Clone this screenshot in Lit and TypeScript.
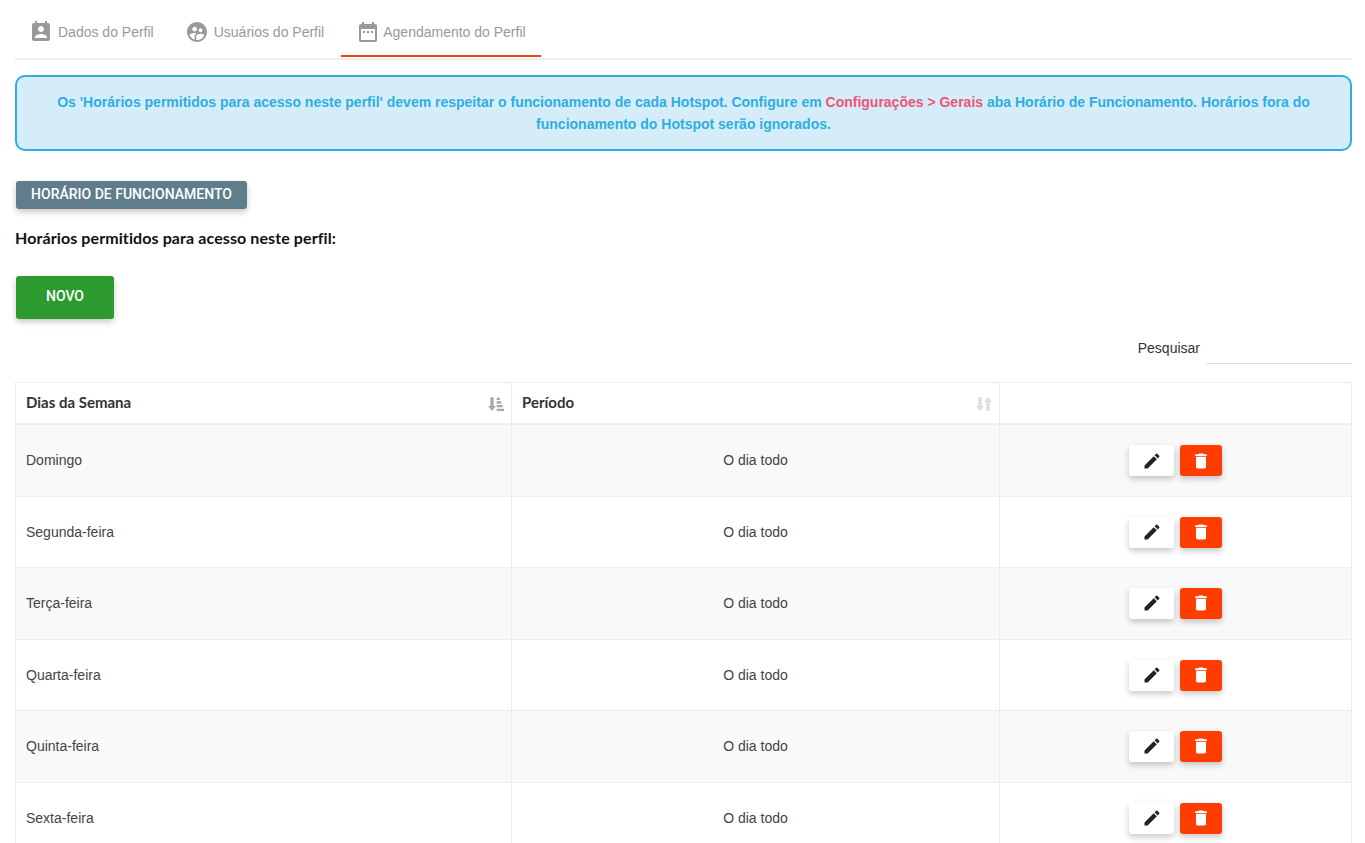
import { LitElement, html, css, svg } from "lit";
import { customElement } from "lit/decorators.js";

const icon = (d: string, cls = "") => html`<svg class=${cls} viewBox="0 0 24 24" fill="currentColor">${svg`<path d=${d}></path>`}</svg>`;
const P = {
  contact: "M19 3h-1V1h-2v2H8V1H6v2H5c-1.11 0-2 .9-2 2v14c0 1.1.89 2 2 2h14c1.1 0 2-.9 2-2V5c0-1.1-.9-2-2-2zm-7 3c1.66 0 3 1.34 3 3s-1.34 3-3 3-3-1.34-3-3 1.34-3 3-3zm6 12H6v-1c0-2 4-3.1 6-3.1s6 1.1 6 3.1v1z",
  users: "M11.99 2c-5.52 0-10 4.48-10 10s4.48 10 10 10 10-4.48 10-10-4.48-10-10-10zm3.61 6.34c1.07 0 1.93.86 1.93 1.93 0 1.07-.86 1.93-1.93 1.93-1.07 0-1.93-.86-1.93-1.93-.01-1.07.86-1.93 1.93-1.93zm-6-1.58c1.3 0 2.36 1.06 2.36 2.36 0 1.3-1.06 2.36-2.36 2.36s-2.36-1.06-2.36-2.36c0-1.31 1.05-2.36 2.36-2.36zm0 9.13v3.75c-2.4-.75-4.3-2.6-5.14-4.96 1.05-1.12 3.67-1.69 5.14-1.69.53 0 1.2.08 1.9.22-1.64.87-1.9 2.02-1.9 2.68zM11.99 20c-.27 0-.53-.01-.79-.04v-4.07c0-1.42 2.94-2.13 4.4-2.13 1.07 0 2.92.39 3.84 1.15-1.17 2.97-4.06 5.09-7.45 5.09z",
  cal: "M7 11h2v2H7zm4 0h2v2h-2zm4 0h2v2h-2zM19 4h-1V2h-2v2H8V2H6v2H5c-1.11 0-1.99.9-1.99 2L3 20c0 1.1.89 2 2 2h14c1.1 0 2-.9 2-2V6c0-1.1-.9-2-2-2zm0 16H5V9h14v11z",
  edit: "M3 17.25V21h3.75L17.81 9.94l-3.75-3.75L3 17.25zM20.71 7.04c.39-.39.39-1.02 0-1.41l-2.34-2.34c-.39-.39-1.02-.39-1.41 0l-1.83 1.83 3.75 3.75 1.83-1.83z",
  del: "M6 19c0 1.1.9 2 2 2h8c1.1 0 2-.9 2-2V7H6v12zM19 4h-3.5l-1-1h-5l-1 1H5v2h14V4z",
  sortA: "M3.5 2h5v13h3.500l-6 7.500L0 15h3.500zM13 2.500h5V6h-5zM13 8h7v3.500h-7zM13 13.500h9V17h-9zM13 19h11v3.500H13z",
  sortB: "M3.5 2h5v13H12l-6 7.500L0 15h3.500zM15.500 22h5V9H24l-6-7.500L12 9h3.500z",
};

const days = ["Domingo", "Segunda-feira", "Terça-feira", "Quarta-feira", "Quinta-feira", "Sexta-feira", "Sábado"];

@customElement("app-root")
export class AppRoot extends LitElement {
  static styles = css`
    :host { display: block; height: 843px; overflow: hidden; background: #fff; font-family: "Liberation Sans", Arial, sans-serif; font-size: 14px; color: #333; }
    .page { padding: 0 13px 0 15px; }
    .tabs { display: flex; height: 58px; border-bottom: 2px solid #eee; box-sizing: content-box; }
    .tab { display: flex; align-items: center; padding: 6px 15px 0 14px; color: #999; position: relative; box-sizing: border-box; height: 57px; }
    .tab svg { width: 24px; height: 24px; margin-right: 5px; }
    .tab:nth-child(2) { padding-left: 16px; padding-right: 17px; }
    .tab:nth-child(3) { padding-left: 15px; }
    .tab:nth-child(3) svg { margin-right: 3px; }
    .tab.on::after { content: ""; position: absolute; left: 0; right: 0; bottom: 0; height: 2px; background: #e8450f; }
    .alert { margin-top: 15px; height: 76px; box-sizing: border-box; border: 2px solid #2eaee0; border-radius: 10px; background: #d5edf8; color: #2eaee0; font-weight: 700; text-align: center; line-height: 22px; padding: 14px 30px 0; }
    .alert span { color: #ec5578; }
    .btn { display: flex; align-items: center; justify-content: center; border: 0; border-radius: 3px; color: #fff; font-family: inherit; box-sizing: border-box; box-shadow: 0 3px 6px rgba(0,0,0,.22); }
    .hours { margin: 30px 0 0 1px; width: 231px; height: 28px; padding-bottom: 4px; background: #607d8b; font: 500 14px Roboto, sans-serif; }
    h3 { margin: 19px 0 0; font: 700 16px/20px Lato, "Open Sans", sans-serif; letter-spacing: .1px; color: #111; }
    .novo { margin: 28px 0 0 1px; width: 98px; height: 43px; padding-bottom: 5px; background: #2d9a2f; font: 500 14px Roboto, sans-serif; }
    .search { display: flex; justify-content: flex-end; align-items: flex-start; margin-top: 20px; height: 44px; }
    .search label { line-height: 18px; margin-right: 6px; }
    .search div { width: 146px; height: 24px; border-bottom: 1px solid #ddd; }
    table { width: 1337px; border-collapse: collapse; table-layout: fixed; margin-top: -1px; }
    col.a { width: 496px; } col.b { width: 488px; }
    th, td { border: 1px solid #eee; padding: 0 10px; box-sizing: border-box; }
    th { height: 41.5px; padding-bottom: 2px; border-bottom-width: 2px; text-align: left; font: 700 15px Lato, sans-serif; color: #333; position: relative; }
    th svg { position: absolute; right: 7px; top: 13px; width: 16px; height: 16px; }
    th svg.s1 { color: #aaa; } th svg.s2 { color: #ddd; }
    td { height: 71px; color: #444; vertical-align: top; padding-top: 20px; line-height: 31px; }
    tr:nth-child(odd) td { background: #f9f9f9; height: 72px; }
    td.c { text-align: center; }
    .acts { display: flex; justify-content: center; gap: 6px; }
    .ib { height: 31px; border-radius: 3px; padding: 0; }
    .ib svg { width: 20px; height: 20px; }
    .e { width: 45px; background: #fff; color: #222; }
    .d { width: 42px; background: #ff3d00; }
  `;

  render() {
    return html`<div class="page">
      <div class="tabs">
        <div class="tab">${icon(P.contact)}Dados do Perfil</div>
        <div class="tab">${icon(P.users)}Usuários do Perfil</div>
        <div class="tab on">${icon(P.cal)}Agendamento do Perfil</div>
      </div>
      <div class="alert">Os 'Horários permitidos para acesso neste perfil' devem respeitar o funcionamento de cada Hotspot. Configure em <span>Configurações &gt; Gerais</span> aba Horário de Funcionamento. Horários fora do funcionamento do Hotspot serão ignorados.</div>
      <button class="btn hours">HORÁRIO DE FUNCIONAMENTO</button>
      <h3>Horários permitidos para acesso neste perfil:</h3>
      <button class="btn novo">NOVO</button>
      <div class="search"><label>Pesquisar</label><div></div></div>
      <table>
        <colgroup><col class="a" /><col class="b" /><col /></colgroup>
        <thead><tr>
          <th>Dias da Semana${icon(P.sortA, "s1")}</th>
          <th>Período${icon(P.sortB, "s2")}</th>
          <th></th>
        </tr></thead>
        <tbody>
          ${days.map((d) => html`<tr>
            <td>${d}</td>
            <td class="c">O dia todo</td>
            <td><div class="acts">
              <button class="btn ib e" aria-label="Editar">${icon(P.edit)}</button>
              <button class="btn ib d" aria-label="Excluir">${icon(P.del)}</button>
            </div></td>
          </tr>`)}
        </tbody>
      </table>
    </div>`;
  }
}
